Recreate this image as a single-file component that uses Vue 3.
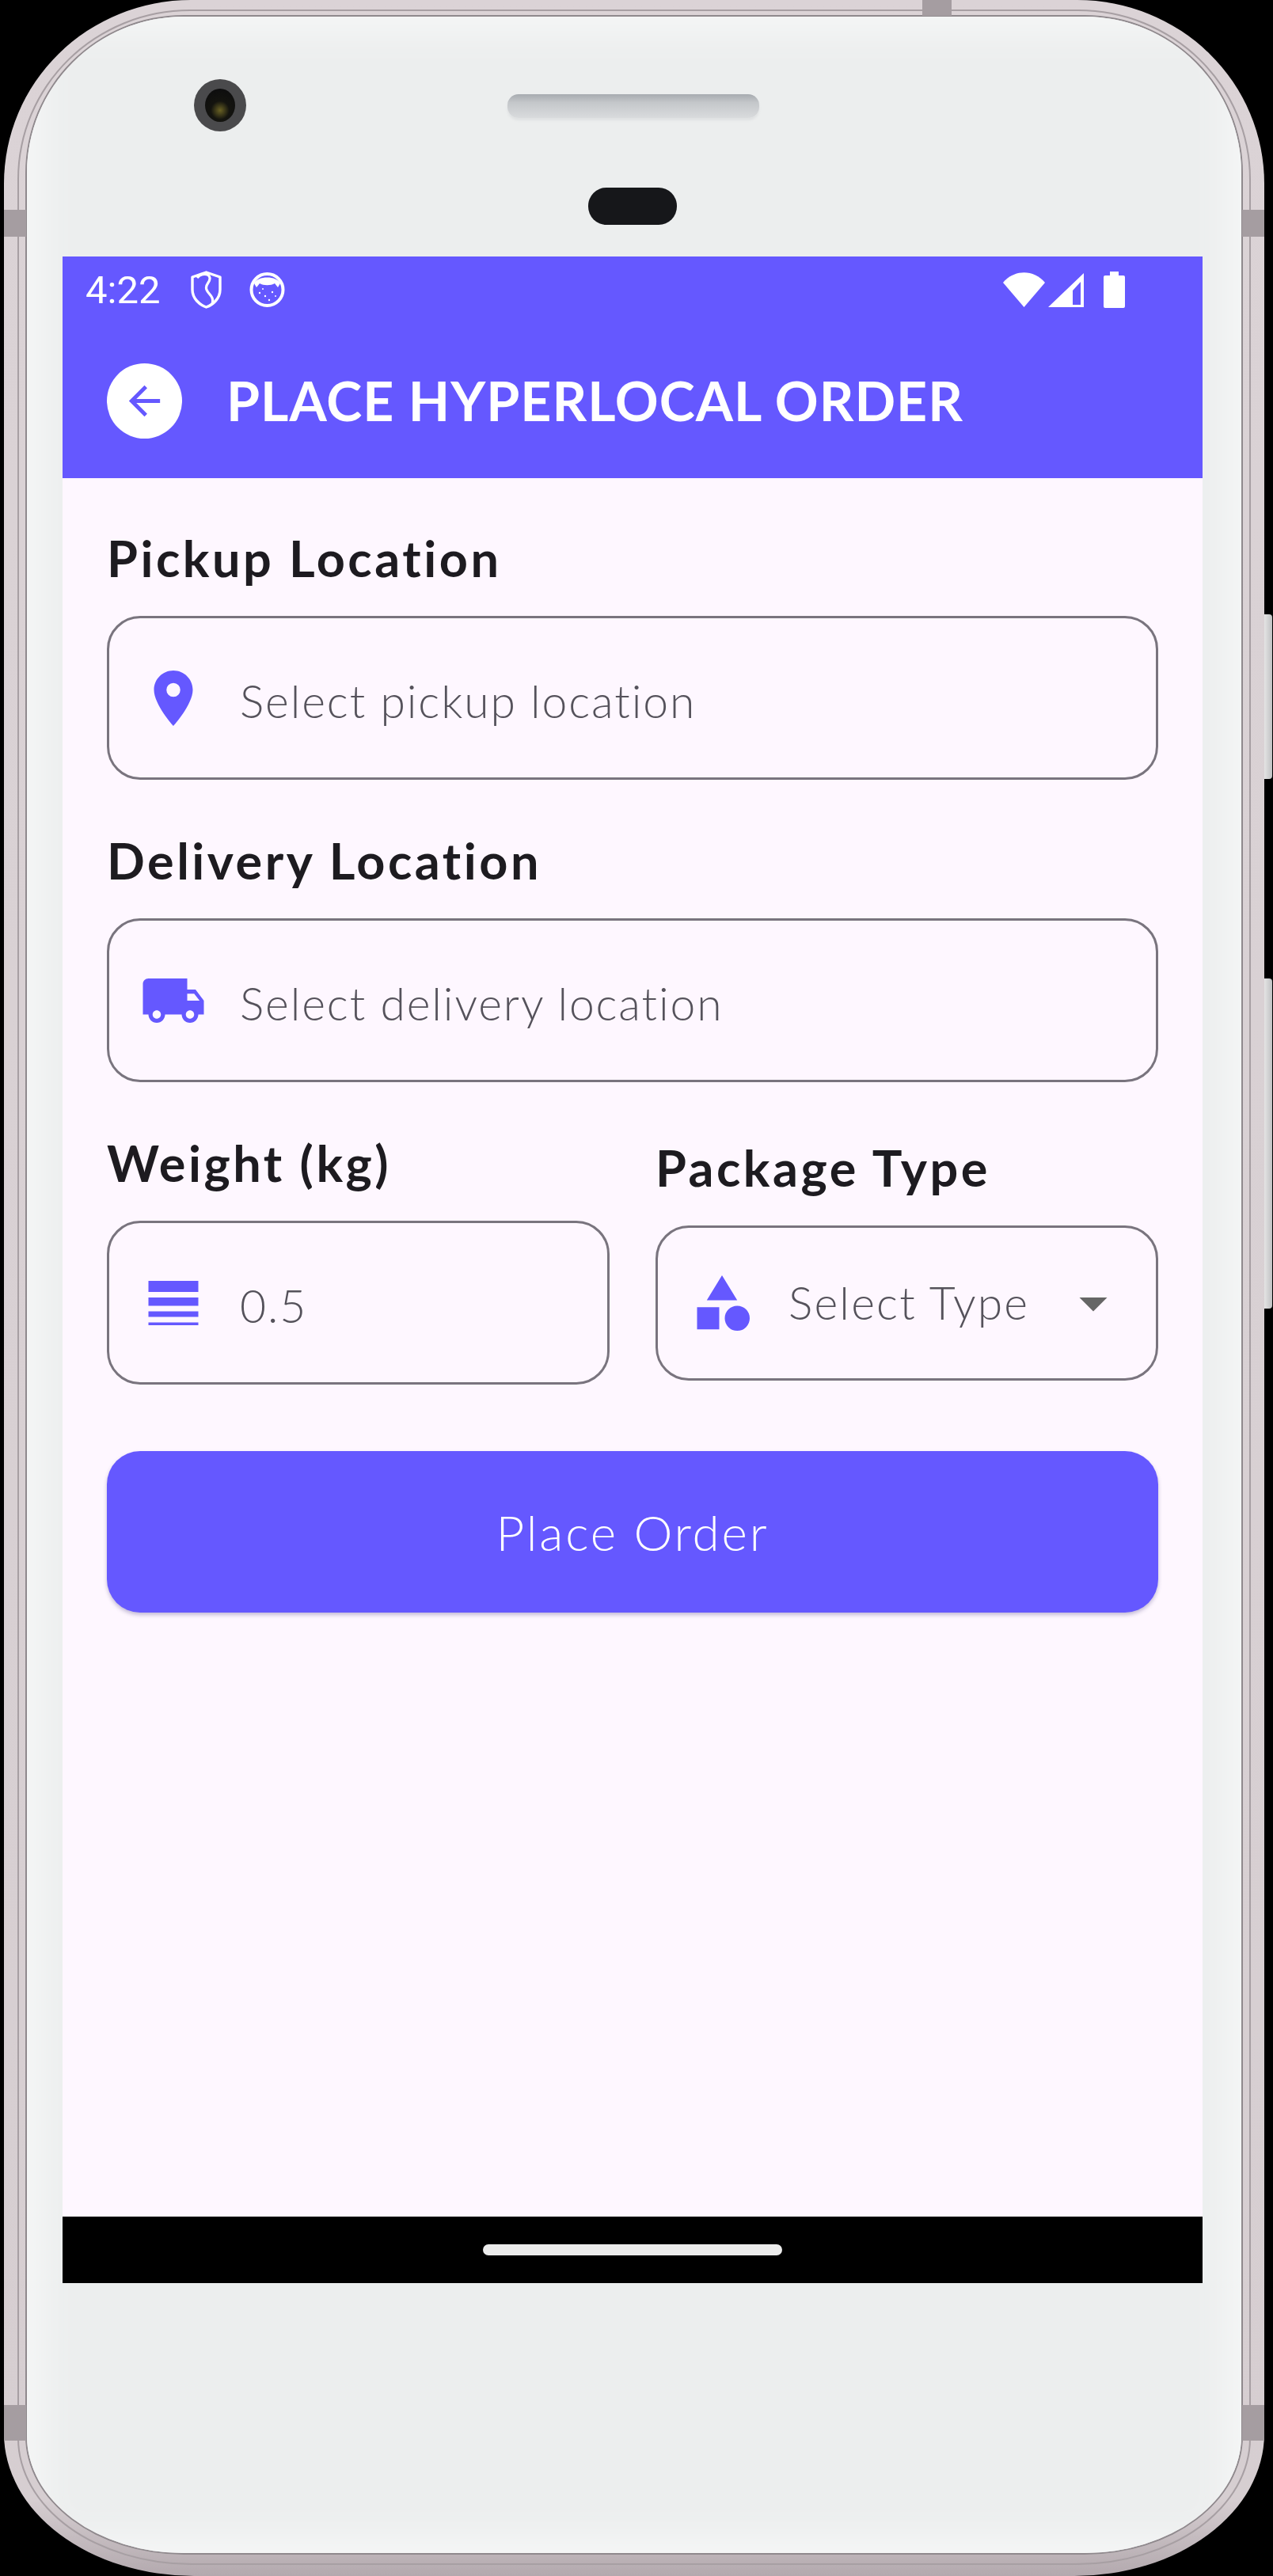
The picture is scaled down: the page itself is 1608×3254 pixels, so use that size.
<script setup>
const ICON = {
  pin: 'M12 2C8.13 2 5 5.13 5 9c0 5.25 7 13 7 13s7-7.75 7-13c0-3.87-3.13-7-7-7zm0 9.5a2.5 2.5 0 0 1 0-5 2.5 2.5 0 0 1 0 5z',
  truck: 'M20 8h-3V4H3c-1.1 0-2 .9-2 2v11h2c0 1.66 1.34 3 3 3s3-1.34 3-3h6c0 1.66 1.34 3 3 3s3-1.34 3-3h2v-5l-3-4zM6 18.5c-.83 0-1.5-.67-1.5-1.5s.67-1.5 1.5-1.5 1.5.67 1.5 1.5-.67 1.5-1.5 1.5zm13.5-9l1.96 2.5H17V9.5h2.5zm-1.5 9c-.83 0-1.5-.67-1.5-1.5s.67-1.5 1.5-1.5 1.5.67 1.5 1.5-.67 1.5-1.5 1.5z',
  lines: 'M3 17h18v-2H3v2zm0 3h18v-1H3v1zm0-7h18v-3H3v3zm0-9v4h18V4H3z',
  shapes: 'M12 2l-5.5 9h11zM17.5 13a4.5 4.5 0 1 0 0 9 4.5 4.5 0 0 0 0-9zM3 13.5h8v8H3z'
}
const locations = [
  { label: 'Pickup Location', icon: ICON.pin, text: 'Select pickup location' },
  { label: 'Delivery Location', icon: ICON.truck, text: 'Select delivery location' }
]
</script>

<template>
  <div class="stage">
    <div class="frame">
      <div class="rim">
        <div class="bevel">
          <div class="face">
            <div class="hardware">
              <div class="camera"><div class="lens"></div></div>
              <div class="speaker"></div>
              <div class="sensor"></div>
            </div>
            <div class="screen">
              <div class="status">
                <span class="time">4:22</span>
                <svg class="st-shield" viewBox="0 0 39 48">
                  <path d="M19.5 2 L37 8 V24 C37 35 28 43 19.5 46 C11 43 2 35 2 24 V8 Z" fill="none" stroke="#fff" stroke-width="3.4" stroke-linejoin="round" />
                  <path d="M8 9 C13 3 23 3 24 9 C25 15 17 17 20 24 C22 30 30 32 27 42" fill="none" stroke="#fff" stroke-width="3.2" />
                </svg>
                <svg class="st-cat" viewBox="0 0 45 44">
                  <circle cx="22.5" cy="22" r="20" fill="none" stroke="#fff" stroke-width="4" />
                  <path d="M6 14 C10 4 35 4 39 14 L36 19 L32 14 C27 17 18 17 13 14 L9 19 Z" fill="#fff" />
                  <circle cx="13" cy="26" r="1.2" fill="#fff" /><circle cx="20" cy="30" r="1.2" fill="#fff" />
                  <circle cx="29" cy="25" r="1.2" fill="#fff" /><circle cx="25" cy="35" r="1.2" fill="#fff" />
                  <circle cx="33" cy="30" r="1" fill="#fff" /><circle cx="17" cy="21" r="1" fill="#fff" />
                </svg>
                <span class="spacer"></span>
                <svg class="st-wifi" viewBox="0 0 53 44"><path d="M0 13 C14 -4 39 -4 53 13 L26.5 44 Z" fill="#fff" /></svg>
                <svg class="st-signal" viewBox="0 0 45 43"><path fill-rule="evenodd" d="M45 0 V43 H0 Z M41 11 L31 22 V40 H41 Z" fill="#fff" /></svg>
                <svg class="st-battery" viewBox="0 0 27 46"><path d="M8 0 H19 V5 H25 Q27 5 27 7 V44 Q27 46 25 46 H2 Q0 46 0 44 V7 Q0 5 2 5 H8 Z" fill="#fff" /></svg>
              </div>
              <header class="appbar">
                <button class="back" type="button" aria-label="Back">
                  <svg viewBox="0 0 24 24"><path d="M20 11H7.83l5.59-5.59L12 4l-8 8 8 8 1.41-1.41L7.83 13H20v-2z" fill="#6558ff" /></svg>
                </button>
                <h1 class="title">PLACE HYPERLOCAL ORDER</h1>
              </header>
              <main class="content">
                <section v-for="loc in locations" :key="loc.label" class="group">
                  <div class="label">{{ loc.label }}</div>
                  <div class="field">
                    <svg class="ficon" viewBox="0 0 24 24"><path :d="loc.icon" fill="#6558ff" /></svg>
                    <span class="ftext">{{ loc.text }}</span>
                  </div>
                </section>
                <div class="row">
                  <section class="col">
                    <div class="label">Weight (kg)</div>
                    <div class="field">
                      <svg class="ficon" viewBox="0 0 24 24"><path :d="ICON.lines" fill="#6558ff" /></svg>
                      <span class="ftext">0.5</span>
                    </div>
                  </section>
                  <section class="col">
                    <div class="label">Package Type</div>
                    <div class="field select">
                      <svg class="ficon" viewBox="0 0 24 24"><path :d="ICON.shapes" fill="#6558ff" /></svg>
                      <span class="ftext grow">Select Type</span>
                      <svg class="ficon" viewBox="0 0 24 24"><path d="M7 10l5 5 5-5z" fill="#666" /></svg>
                    </div>
                  </section>
                </div>
                <button class="cta" type="button">Place Order</button>
              </main>
              <div class="navbar"><div class="home"></div></div>
            </div>
          </div>
        </div>
      </div>
      <i class="band left top"></i>
      <i class="band right top"></i>
      <i class="band left bot"></i>
      <i class="band right bot"></i>
      <i class="band-top"></i>
    </div>
    <i class="key k1"></i>
    <i class="key k2"></i>
  </div>
</template>

<style>
html, body { margin: 0; background: #000; }
</style>

<style scoped>
.stage { position: relative; width: 1608px; height: 3254px; background: #000; overflow: hidden; font-family: Lato, "Open Sans", sans-serif; }
.frame { position: relative; margin-left: 5px; width: 1592px; height: 3254px; box-sizing: border-box; padding: 12px 17px 14px; display: flex; border-radius: 236px 236px 240px 240px / 232px 232px 180px 180px; background: linear-gradient(180deg, #dbd3d6 0, #d6ced1 97%, #b3a9ae 100%); }
.rim { flex: 1; display: flex; box-sizing: border-box; padding: 5px 8px 11px; border: 2px solid #a79fa3; border-radius: 218px 218px 220px 220px / 214px 214px 160px 160px; }
.bevel { flex: 1; display: flex; border: 2px solid #8f898d; border-radius: 200px 200px 200px 200px / 200px 200px 150px 150px; overflow: hidden; background: #e0dbdd; }
.face { flex: 1; display: flex; flex-direction: column; padding: 0 49px 0 45px; background: #eceeee; box-shadow: inset 0 0 46px 18px #f6f7f7; }
.hardware { position: relative; height: 303px; flex: none; }
.camera { position: absolute; left: 166px; top: 79px; width: 66px; height: 66px; border-radius: 50%; background: #4a4a4c; display: flex; align-items: center; justify-content: center; }
.lens { width: 38px; height: 42px; border-radius: 50%; background: radial-gradient(circle at 50% 65%, #6a6224 0, #14140f 35%, #0b0b0e 100%); }
.speaker { position: absolute; left: 562px; top: 98px; width: 318px; height: 30px; border-radius: 14px; background: linear-gradient(180deg, #a7abb0 0, #c4c7ca 35%, #d9dbdd 100%); box-shadow: 0 3px 3px #dfe1e2; }
.sensor { position: absolute; left: 664px; top: 216px; width: 112px; height: 47px; border-radius: 23px; background: #16171a; }
.screen { width: 1440px; height: 2560px; flex: none; display: flex; flex-direction: column; background: #fef7ff; }
.status { height: 84px; flex: none; display: flex; align-items: center; padding: 0 98px 0 29px; background: #6558ff; color: #fff; }
.time { font: 400 49px/1 Roboto, sans-serif; width: 133px; }
.st-shield { width: 39px; height: 48px; margin-right: 35px; }
.st-cat { width: 45px; height: 44px; }
.spacer { flex: 1; }
.st-wifi { width: 53px; height: 44px; margin-right: 4px; }
.st-signal { width: 45px; height: 43px; margin-right: 25px; }
.st-battery { width: 27px; height: 46px; }
.appbar { height: 196px; flex: none; box-sizing: border-box; display: flex; align-items: center; gap: 56px; padding-left: 56px; background: #6558ff; }
.back { width: 95px; height: 95px; flex: none; padding: 0; border: 0; border-radius: 50%; background: #fff; display: flex; align-items: center; justify-content: center; }
.back svg { width: 59px; height: 59px; }
.title { margin: 0; font: 700 68px/1 Lato, sans-serif; color: #fff; letter-spacing: 1px; }
.content { flex: 1; box-sizing: border-box; padding: 69px 56px 0; display: flex; flex-direction: column; }
.group { margin-bottom: 70px; }
.label { height: 70px; font-size: 63px; line-height: 64px; font-weight: 700; letter-spacing: 3.5px; color: #1d1b20; margin-bottom: 35px; white-space: nowrap; }
.field { height: 207px; box-sizing: border-box; display: flex; align-items: center; gap: 42px; padding: 0 42px; border: 3.5px solid #79747e; border-radius: 42px; }
.field.select { height: 196px; gap: 42px; padding-right: 46px; }
.ficon { width: 84px; height: 84px; flex: none; margin-left: -3px; }
.ftext { margin-top: 6px; font-size: 57px; font-weight: 300; letter-spacing: 1.9px; color: #55525b; white-space: nowrap; }
.select .ftext { margin-top: -2px; letter-spacing: 2.2px; }
.grow { flex: 1; }
.row { display: flex; align-items: center; gap: 58px; }
.col { flex: 1; min-width: 0; }
.cta { margin-top: 84px; height: 204px; flex: none; padding: 0; border: 0; border-radius: 42px; background: #6558ff; color: #fff; font: 300 62px/1 Lato, sans-serif; letter-spacing: 2.8px; box-shadow: 0 3px 5px rgba(60, 50, 120, .3); }
.navbar { height: 84px; flex: none; background: #000; display: flex; justify-content: center; padding-top: 35px; box-sizing: border-box; }
.home { width: 378px; height: 14px; border-radius: 7px; background: #ececec; }
.band { position: absolute; width: 28px; background: #a59da1; }
.band.left { left: 0; }
.band.right { right: 0; }
.band.top { top: 265px; height: 34px; }
.band.bot { top: 3038px; height: 45px; }
.band-top { position: absolute; left: 1160px; top: 0; width: 37px; height: 20px; background: #a59da1; }
.key { position: absolute; left: 1597px; width: 10px; background: linear-gradient(90deg, #e4e4e4, #bfc0c2); border-radius: 0 4px 4px 0; }
.k1 { top: 776px; height: 208px; }
.k2 { top: 1236px; height: 417px; }
</style>
